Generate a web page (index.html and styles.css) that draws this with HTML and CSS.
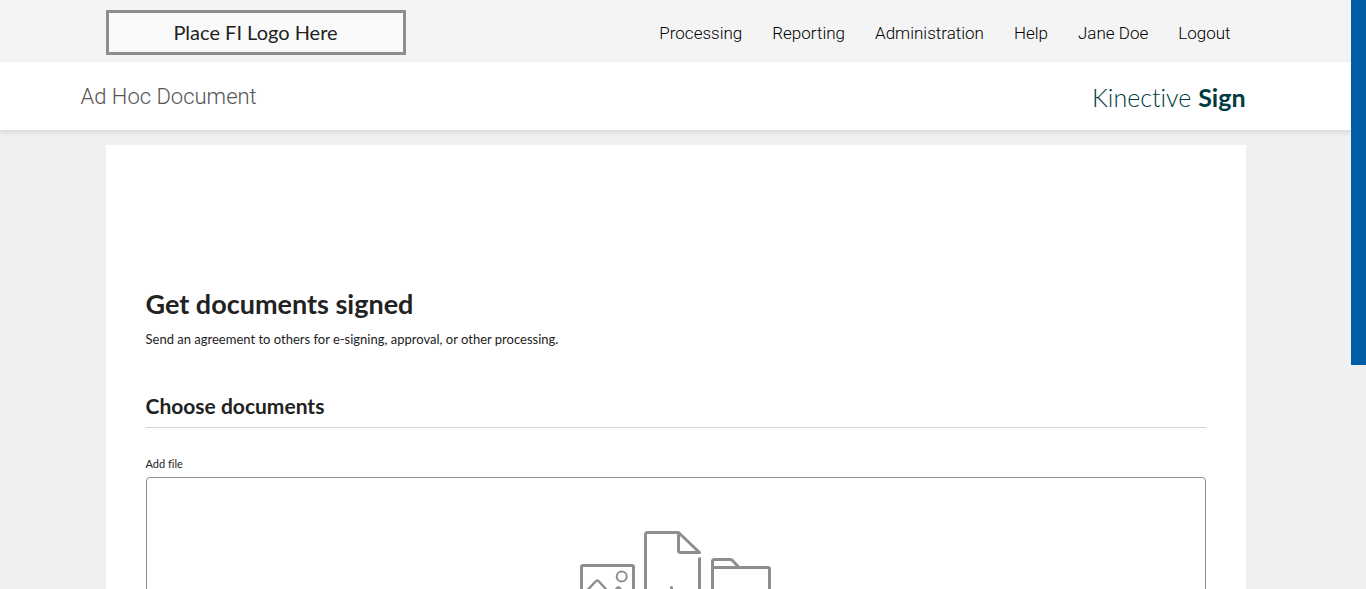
FILE: index.html
```
<!DOCTYPE html>
<html lang="en">
<head>
<meta charset="utf-8">
<meta name="viewport" content="width=device-width, initial-scale=1">
<title>Ad Hoc Document</title>
<link rel="stylesheet" href="styles.css">
</head>
<body>
<div class="app">
  <div class="page">
    <header class="topbar">
      <div class="container topbar-row">
        <a class="fi-logo" href="#">Place FI Logo Here</a>
        <nav class="nav">
          <a href="#">Processing</a>
          <a href="#">Reporting</a>
          <a href="#">Administration</a>
          <a href="#">Help</a>
          <a href="#">Jane Doe</a>
          <a href="#">Logout</a>
        </nav>
      </div>
    </header>
    <div class="titlebar">
      <div class="titlebar-row">
        <h1 class="page-title">Ad Hoc Document</h1>
        <div class="brand">Kinective <b>Sign</b></div>
      </div>
    </div>
    <main class="container">
      <div class="card">
        <h2 class="heading">Get documents signed</h2>
        <p class="lead">Send an agreement to others for e-signing, approval, or other processing.</p>
        <h3 class="section-title">Choose documents</h3>
        <div class="label" id="add-file">Add file</div>
        <button class="dropzone" type="button" aria-labelledby="add-file">
          <svg class="files" width="192" height="92" viewBox="0 0 192 92" fill="none" stroke="#8e8e8e" stroke-width="3" stroke-linecap="round" stroke-linejoin="round">
            <rect x="1.500" y="35.500" width="52" height="44" rx="1.500"/>
            <circle cx="41.700" cy="46.500" r="5" stroke-width="2"/>
            <path stroke-width="2.400" d="M2 66 15.500 51.500Q17.300 49.200 19 51.500L44 79M30.500 65 37 58.300Q38.400 56 39.800 58.300L53 72"/>
            <path d="M119.500 28.500V86Q119.500 88 117.500 88H67.500Q65.500 88 65.500 86V4.500Q65.500 2.500 67.500 2.500H98.500L119.500 22.500H100.500Q98.500 22.500 98.500 20.500V2.500"/>
            <path d="M91.500 57.500V75M82.500 66H100.500"/>
            <path d="M132.500 38V31.500Q132.500 29.500 134.500 29.500H150Q151.500 29.500 152.500 30.500L159 37.500M132.500 37.500H188Q189.500 37.500 189.500 39V78Q189.500 80 187.500 80H134.500Q132.500 80 132.500 78V37.500"/>
          </svg>
        </button>
      </div>
    </main>
  </div>
  <div class="scroll-track"><div class="scroll-thumb"></div></div>
</div>
</body>
</html>
```
FILE: styles.css
```
* {
  box-sizing: border-box;
}

body {
  margin: 0;
  background: #f0f0f0;
  color: #222;
  font-family: Lato, "Open Sans", sans-serif;
  font-variant-ligatures: none;
}

.app {
  display: flex;
  height: 100vh;
  overflow: hidden;
}

.page {
  flex: 1;
  min-width: 0;
}

.scroll-track {
  flex: 0 0 15px;
  background: #f0f0f0;
}

.scroll-thumb {
  height: 62%;
  background: #005da6;
}

.container {
  max-width: 1170px;
  margin: 0 auto;
  padding: 0 15px;
}

.topbar {
  background: #f4f4f4;
}

.topbar-row {
  display: flex;
  align-items: center;
  justify-content: space-between;
  padding-top: 10px;
  padding-bottom: 7px;
}

.fi-logo {
  width: 300px;
  border: 3px solid #8e8e8e;
  background: #fafafa;
  color: #222;
  font-size: 20px;
  line-height: 39px;
  text-align: center;
  text-decoration: none;
}

.nav {
  display: flex;
  gap: 30px;
  padding-right: 15px;
}

.nav a {
  color: #000;
  font: 300 17px/24px Roboto, sans-serif;
  text-decoration: none;
}

.titlebar {
  background: #fff;
  box-shadow: 0 2px 5px rgba(0, 0, 0, 0.12);
}

.titlebar-row {
  display: flex;
  align-items: center;
  justify-content: space-between;
  max-width: 1190px;
  margin: 0 auto;
  padding: 17px 25px 15px 0;
}

.page-title {
  margin: 0;
  color: #555;
  font: 300 22px/36px Roboto, sans-serif;
}

.brand {
  color: #003b40;
  font-size: 25px;
  line-height: 36px;
  font-weight: 300;
}

.brand b {
  font-weight: 700;
}

.card {
  margin-top: 15px;
  padding: 140px 40px 40px;
  background: #fff;
}

.heading {
  margin: 0;
  font-size: 27px;
  line-height: 38px;
  font-weight: 700;
}

.lead {
  margin: 6px 0 0;
  font-size: 13px;
  line-height: 20px;
}

.section-title {
  margin: 43px 0 0;
  padding-bottom: 7px;
  border-bottom: 1px solid #d3d3d3;
  font-size: 21px;
  line-height: 28px;
  font-weight: 700;
}

.label {
  margin-top: 27px;
  font-size: 11px;
  line-height: 18px;
}

.dropzone {
  display: block;
  width: 100%;
  margin-top: 4px;
  padding: 52px 0 60px;
  border: 1px solid #8e8e8e;
  border-radius: 4px;
  background: #fff;
  text-align: center;
}

.files {
  display: block;
  margin: 0 auto;
}
```
